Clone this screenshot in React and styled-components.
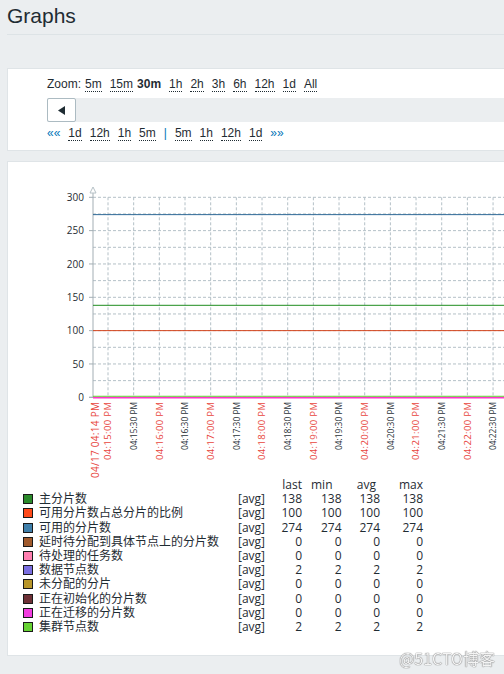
import React from "react";
import styled, { createGlobalStyle } from "styled-components";

const GlobalStyle = createGlobalStyle`
  html, body {
    margin: 0;
    padding: 0;
    overflow: hidden;
    background: #ebeef0;
  }
  body {
    font-family: "Liberation Sans", Arial, sans-serif;
    font-size: 12px;
    color: #1f2c33;
  }
`;

const ZOOMS = ["5m", "15m", "30m", "1h", "2h", "3h", "6h", "12h", "1d", "All"];
const BACK = ["1d", "12h", "1h", "5m"];
const FWD = ["5m", "1h", "12h", "1d"];

const SERIES = [
  { name: "主分片数", color: "#2b8a2b", v: ["138", "138", "138", "138"] },
  { name: "可用分片数占总分片的比例", color: "#ff4a1a", v: ["100", "100", "100", "100"] },
  { name: "可用的分片数", color: "#3f7faa", v: ["274", "274", "274", "274"] },
  { name: "延时待分配到具体节点上的分片数", color: "#a05a2c", v: ["0", "0", "0", "0"] },
  { name: "待处理的任务数", color: "#ff7fb0", v: ["0", "0", "0", "0"] },
  { name: "数据节点数", color: "#7a6ee0", v: ["2", "2", "2", "2"] },
  { name: "未分配的分片", color: "#b8962a", v: ["0", "0", "0", "0"] },
  { name: "正在初始化的分片数", color: "#6e3036", v: ["0", "0", "0", "0"] },
  { name: "正在迁移的分片数", color: "#f23ce0", v: ["0", "0", "0", "0"] },
  { name: "集群节点数", color: "#66d233", v: ["2", "2", "2", "2"] },
];

// chart geometry, in svg coords (svg starts at page 8,163)
const AX = 85;
const TOP = 35.3;
const BOTTOM = 235.3;
const STEP = 25.67;
const GX0 = 100;
const yOf = (v) => BOTTOM - (v * 200) / 300;

const TIMES = [
  "04:15:00", "04:15:30", "04:16:00", "04:16:30", "04:17:00", "04:17:30",
  "04:18:00", "04:18:30", "04:19:00", "04:19:30", "04:20:00", "04:20:30",
  "04:21:00", "04:21:30", "04:22:00", "04:22:30",
];

const Page = styled.div`
  width: 600px;
  padding-left: 7px;
  height: 674px;
`;

const Header = styled.div`
  height: 30px;
  padding-top: 4px;
  border-bottom: 1px solid #dde3e6;
`;

const Title = styled.h1`
  margin: 0;
  font-size: 21px;
  font-weight: normal;
  line-height: 24px;
  color: #1f2c33;
`;

const Panel = styled.div`
  background: #fff;
  border: 1px solid #dfe4e7;
  margin-top: ${(p) => p.$gap}px;
  padding: ${(p) => p.$pad};
`;

const Row = styled.div`
  display: flex;
  align-items: baseline;
  gap: 8px;
  height: 14px;
  line-height: 14px;
  margin-top: ${(p) => p.$mt || 0}px;
`;

const Label = styled.span`
  margin-right: -4px;
`;

const Link = styled.span`
  border-bottom: 1px dotted #1f2c33;
  line-height: normal;
  font-weight: ${(p) => (p.$active ? "bold" : "normal")};
  border-bottom-color: ${(p) => (p.$active ? "transparent" : "#1f2c33")};
  margin-left: ${(p) => (p.$active ? -4 : 0)}px;
`;

const Arrow = styled.span`
  color: #0275b8;
`;

const Bar = styled.div`
  background: #ebeef0;
  height: 24px;
  margin-top: 7px;
  display: flex;
`;

const Button = styled.button`
  width: 29px;
  height: 24px;
  box-sizing: border-box;
  background: #fff;
  border: 1px solid #acbbc2;
  border-radius: 2px;
  padding: 0;
  display: flex;
  align-items: center;
  justify-content: center;
`;

const Chart = styled.svg`
  display: block;
  width: 520px;
  height: 316px;
  overflow: visible;
  font-family: "Open Sans", "DejaVu Sans", sans-serif;
`;

const Legend = styled.div`
  display: grid;
  grid-template-columns: 16px 199px 26px 38px 39.5px 38.5px 43px;
  grid-auto-rows: 14.2px;
  align-items: center;
  padding-left: 15px;
  font-family: "Open Sans", "Noto Sans CJK SC", sans-serif;
  font-size: 12px;
  color: #1f2c33;
  line-height: 14px;
  white-space: nowrap;
`;

const Swatch = styled.span`
  width: 8px;
  height: 8px;
  border: 1px solid #1a1a1a;
  background: ${(p) => p.$color};
`;

const Cell = styled.span`
  text-align: ${(p) => (p.$right ? "right" : "left")};
  padding-right: ${(p) => p.$pr || 0}px;
`;

const Watermark = styled.div`
  position: fixed;
  right: 9px;
  bottom: 6px;
  font-family: "Noto Sans CJK SC", sans-serif;
  font-size: 16px;
  line-height: 20px;
  color: #f4f4f4;
  text-shadow: 0 0 1px #6d6d6d, 0 0 1px #6d6d6d;
`;

function GraphChart() {
  const hLines = [];
  for (let v = 0; v <= 300; v += 25) hLines.push(yOf(v));
  const vLines = [];
  for (let i = 0; i < 18; i++) vLines.push(GX0 + i * STEP);

  return (
    <Chart viewBox="0 0 520 316">
      {hLines.map((y, i) => (
        <line key={"h" + i} x1={AX} x2={520} y1={y} y2={y} stroke="#b4c0c7" strokeDasharray="3,2" strokeWidth="1" />
      ))}
      {vLines.map((x, i) => (
        <line key={"v" + i} x1={x} x2={x} y1={TOP} y2={BOTTOM} stroke="#b4c0c7" strokeDasharray="3,2" strokeWidth="1" />
      ))}

      <line x1={AX} x2={AX} y1={27} y2={BOTTOM} stroke="#a3aeb4" />
      <line x1={AX - 4} x2={520} y1={BOTTOM} y2={BOTTOM} stroke="#a3aeb4" />
      <polygon points={`${AX - 3},${31} ${AX + 3},${31} ${AX},${25}`} fill="#fff" stroke="#b6c1c6" />

      {[0, 50, 100, 150, 200, 250, 300].map((v) => (
        <g key={v}>
          <line x1={AX - 4} x2={AX} y1={yOf(v)} y2={yOf(v)} stroke="#a3aeb4" />
          <text x={AX - 9} y={yOf(v) + 3.6} textAnchor="end" fontSize="10" fill="#1f2c33">
            {v}
          </text>
        </g>
      ))}

      <line x1={AX} x2={520} y1={yOf(274)} y2={yOf(274)} stroke="#2f6a97" />
      <line x1={AX} x2={520} y1={yOf(138)} y2={yOf(138)} stroke="#1e8c1e" />
      <line x1={AX} x2={520} y1={yOf(100)} y2={yOf(100)} stroke="#d4441c" />
      <line x1={AX} x2={520} y1={yOf(2) + 0.3} y2={yOf(2) + 0.3} stroke="#66cc33" />
      <line x1={AX} x2={520} y1={BOTTOM + 0.4} y2={BOTTOM + 0.4} stroke="#ff33cc" strokeWidth="1.4" />

      <text
        transform={`translate(${88 + 3},240) rotate(-90)`}
        textAnchor="end"
        fontSize="10"
        fill="#e8453c"
        textLength="76"
        lengthAdjust="spacing"
      >
        04/17 04:14 PM
      </text>
      {TIMES.map((t, i) => {
        const red = i % 2 === 0;
        const cx = GX0 + i * STEP;
        return (
          <text
            key={t}
            transform={`translate(${cx + 3.4},240) rotate(-90)`}
            textAnchor="end"
            fontSize="9.5"
            fill={red ? "#e8453c" : "#2a3238"}
            textLength={red ? 58 : 48}
            lengthAdjust={red ? "spacing" : "spacingAndGlyphs"}
          >
            {t} PM
          </text>
        );
      })}
    </Chart>
  );
}

export default function App() {
  return (
    <>
      <GlobalStyle />
      <Page>
        <Header>
          <Title>Graphs</Title>
        </Header>

        <Panel $gap={33} $pad="8px 0 10px 39px">
          <Row>
            <Label>Zoom:</Label>
            {ZOOMS.map((z) => (
              <Link key={z} $active={z === "30m"}>
                {z}
              </Link>
            ))}
          </Row>
          <Bar>
            <Button aria-label="back">
              <svg width="7" height="9" viewBox="0 0 7 9">
                <polygon points="7,0 7,9 0,4.5" fill="#1f2c33" />
              </svg>
            </Button>
          </Bar>
          <Row $mt={4}>
            <Arrow>««</Arrow>
            {BACK.map((z) => (
              <Link key={"b" + z}>{z}</Link>
            ))}
            <Arrow>|</Arrow>
            {FWD.map((z) => (
              <Link key={"f" + z}>{z}</Link>
            ))}
            <Arrow>»»</Arrow>
          </Row>
        </Panel>

        <Panel $gap={10} $pad="0 0 21px 0">
          <GraphChart />
          <Legend>
            <span />
            <span />
            <span />
            <Cell $right>last</Cell>
            <Cell $right $pr={9}>min</Cell>
            <Cell $right $pr={4}>avg</Cell>
            <Cell $right>max</Cell>
            {SERIES.map((s) => (
              <React.Fragment key={s.name}>
                <Swatch $color={s.color} />
                <Cell>{s.name}</Cell>
                <Cell>[avg]</Cell>
                {s.v.map((v, i) => (
                  <Cell key={i} $right>
                    {v}
                  </Cell>
                ))}
              </React.Fragment>
            ))}
          </Legend>
        </Panel>
        <Watermark>@51CTO博客</Watermark>
      </Page>
    </>
  );
}
